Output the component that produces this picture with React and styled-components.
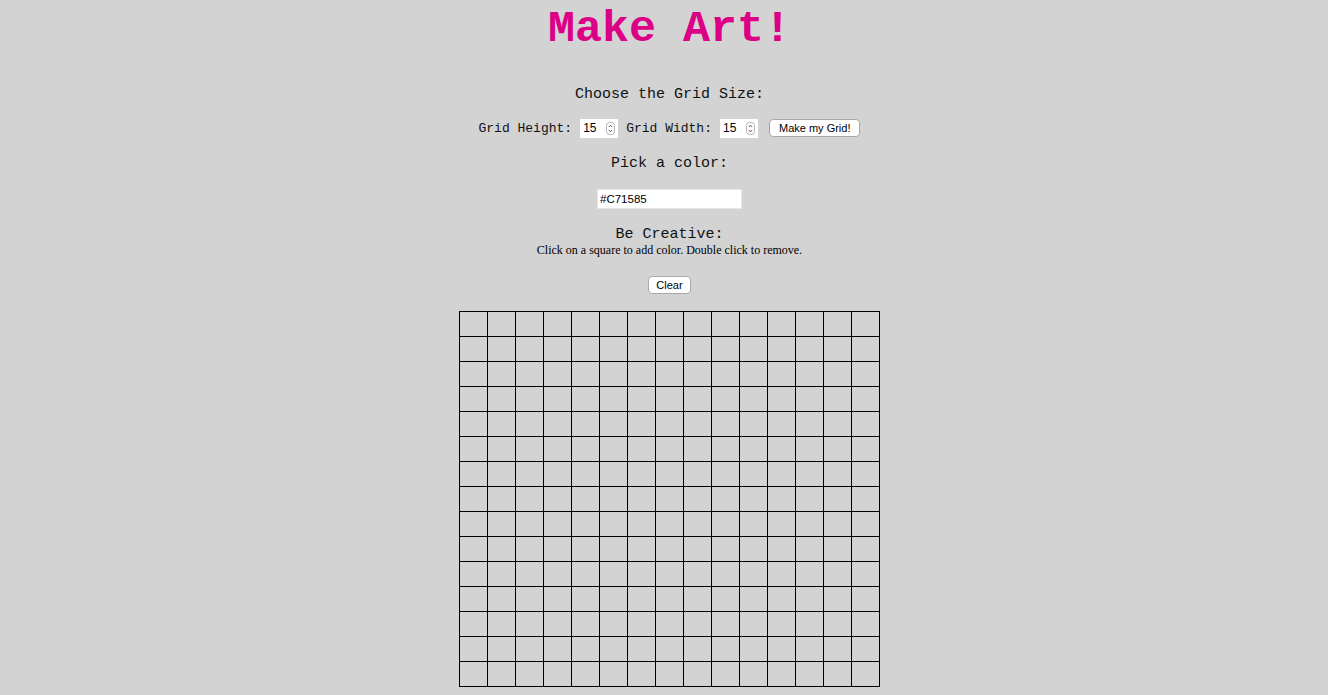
import React from "react";
import styled, { createGlobalStyle } from "styled-components";

const Global = createGlobalStyle`
    html, body {
        margin: 0;
        padding: 0;
        background-color: #d3d3d3;
    }
    body {
        font-family: "Liberation Mono", "Courier New", monospace;
        color: #000;
    }
`;

const Page = styled.div`
    display: flex;
    flex-direction: column;
    align-items: center;
    min-height: 695px;
    padding: 2px 0 20px 11px;
`;

const Title = styled.h1`
    margin: 0;
    font-family: "Liberation Mono", "Courier New", monospace;
    font-size: 45px;
    line-height: 56px;
    font-weight: 700;
    color: #dc0087;
`;

const Heading = styled.h2`
    margin: ${props => props.$top}px 0 0;
    font-family: "Liberation Mono", "Courier New", monospace;
    font-size: 15px;
    font-weight: 400;
    color: #111;
    line-height: ${props => props.$lh || 20}px;
`;

const Hint = styled.p`
    margin: 0;
    font-family: "Liberation Serif", "Times New Roman", serif;
    font-size: 12px;
    line-height: 14px;
`;

const SizeForm = styled.form`
    display: flex;
    align-items: center;
    gap: 8px;
    margin-top: 13px;
    height: 20px;

    label {
        font-size: 13px;
        color: #111;
        display: flex;
        align-items: center;
        gap: 8px;
    }
`;

const NumberBox = styled.div`
    display: flex;
    align-items: center;
    justify-content: space-between;
    width: 38px;
    height: 19px;
    box-sizing: border-box;
    background: #fff;
    padding: 0 3px 0 3px;

    input {
        width: 20px;
        border: none;
        outline: none;
        padding: 0;
        font-family: "Liberation Sans", Arial, sans-serif;
        font-size: 12px;
        background: transparent;
    }
`;

const Button = styled.button`
    font-family: "Liberation Sans", Arial, sans-serif;
    font-size: 11px;
    height: 18px;
    padding: 0 ${props => props.$pad || 7}px;
    margin-left: ${props => props.$left || 0}px;
    margin-top: ${props => props.$top || 0}px;
    background: #fff;
    border: 1px solid #a9a9a9;
    border-radius: 4px;
    color: #000;
    line-height: 16px;
`;

const ColorField = styled.input`
    margin-top: 15px;
    width: 145px;
    height: 20px;
    box-sizing: border-box;
    border: 1px solid #e6e6e6;
    background: #fff;
    padding: 0 2px;
    font-family: "Liberation Sans", Arial, sans-serif;
    font-size: 11.5px;
    outline: none;
`;

const Canvas = styled.table`
    margin-top: 17px;
    border-collapse: collapse;

    td {
        border: 1px solid #000;
        width: 27px;
        height: 24px;
        padding: 0;
    }
`;

function Spinner() {
    return (
        <svg width="9" height="13" viewBox="0 0 9 13">
            <rect x="0.5" y="0.5" width="8" height="12" rx="3" fill="#fff" stroke="#b5b5b5" />
            <path d="M2.8 5 L4.5 3.2 L6.2 5" fill="none" stroke="#555" strokeWidth="1" />
            <path d="M2.8 8 L4.5 9.8 L6.2 8" fill="none" stroke="#555" strokeWidth="1" />
        </svg>
    );
}

function NumberInput({ value }) {
    return (
        <NumberBox>
            <input type="text" defaultValue={value} />
            <Spinner />
        </NumberBox>
    );
}

const rows = Array.from({ length: 15 });
const cols = Array.from({ length: 15 });

export default function App() {
    return (
        <Page>
            <Global />
            <Title>Make Art!</Title>

            <Heading $top={27}>Choose the Grid Size:</Heading>
            <SizeForm onSubmit={e => e.preventDefault()}>
                <label>
                    Grid Height:
                    <NumberInput value="15" />
                </label>
                <label>
                    Grid Width:
                    <NumberInput value="15" />
                </label>
                <Button type="submit" $left={3} $pad={9}>Make my Grid!</Button>
            </SizeForm>

            <Heading $top={16}>Pick a color:</Heading>
            <ColorField type="text" defaultValue="#C71585" />

            <Heading $top={18} $lh={16}>Be Creative:</Heading>
            <Hint>Click on a square to add color. Double click to remove.</Hint>
            <Button $top={19}>Clear</Button>

            <Canvas>
                <tbody>
                    {rows.map((_, r) => (
                        <tr key={r}>
                            {cols.map((_, c) => <td key={c}></td>)}
                        </tr>
                    ))}
                </tbody>
            </Canvas>
        </Page>
    );
}
